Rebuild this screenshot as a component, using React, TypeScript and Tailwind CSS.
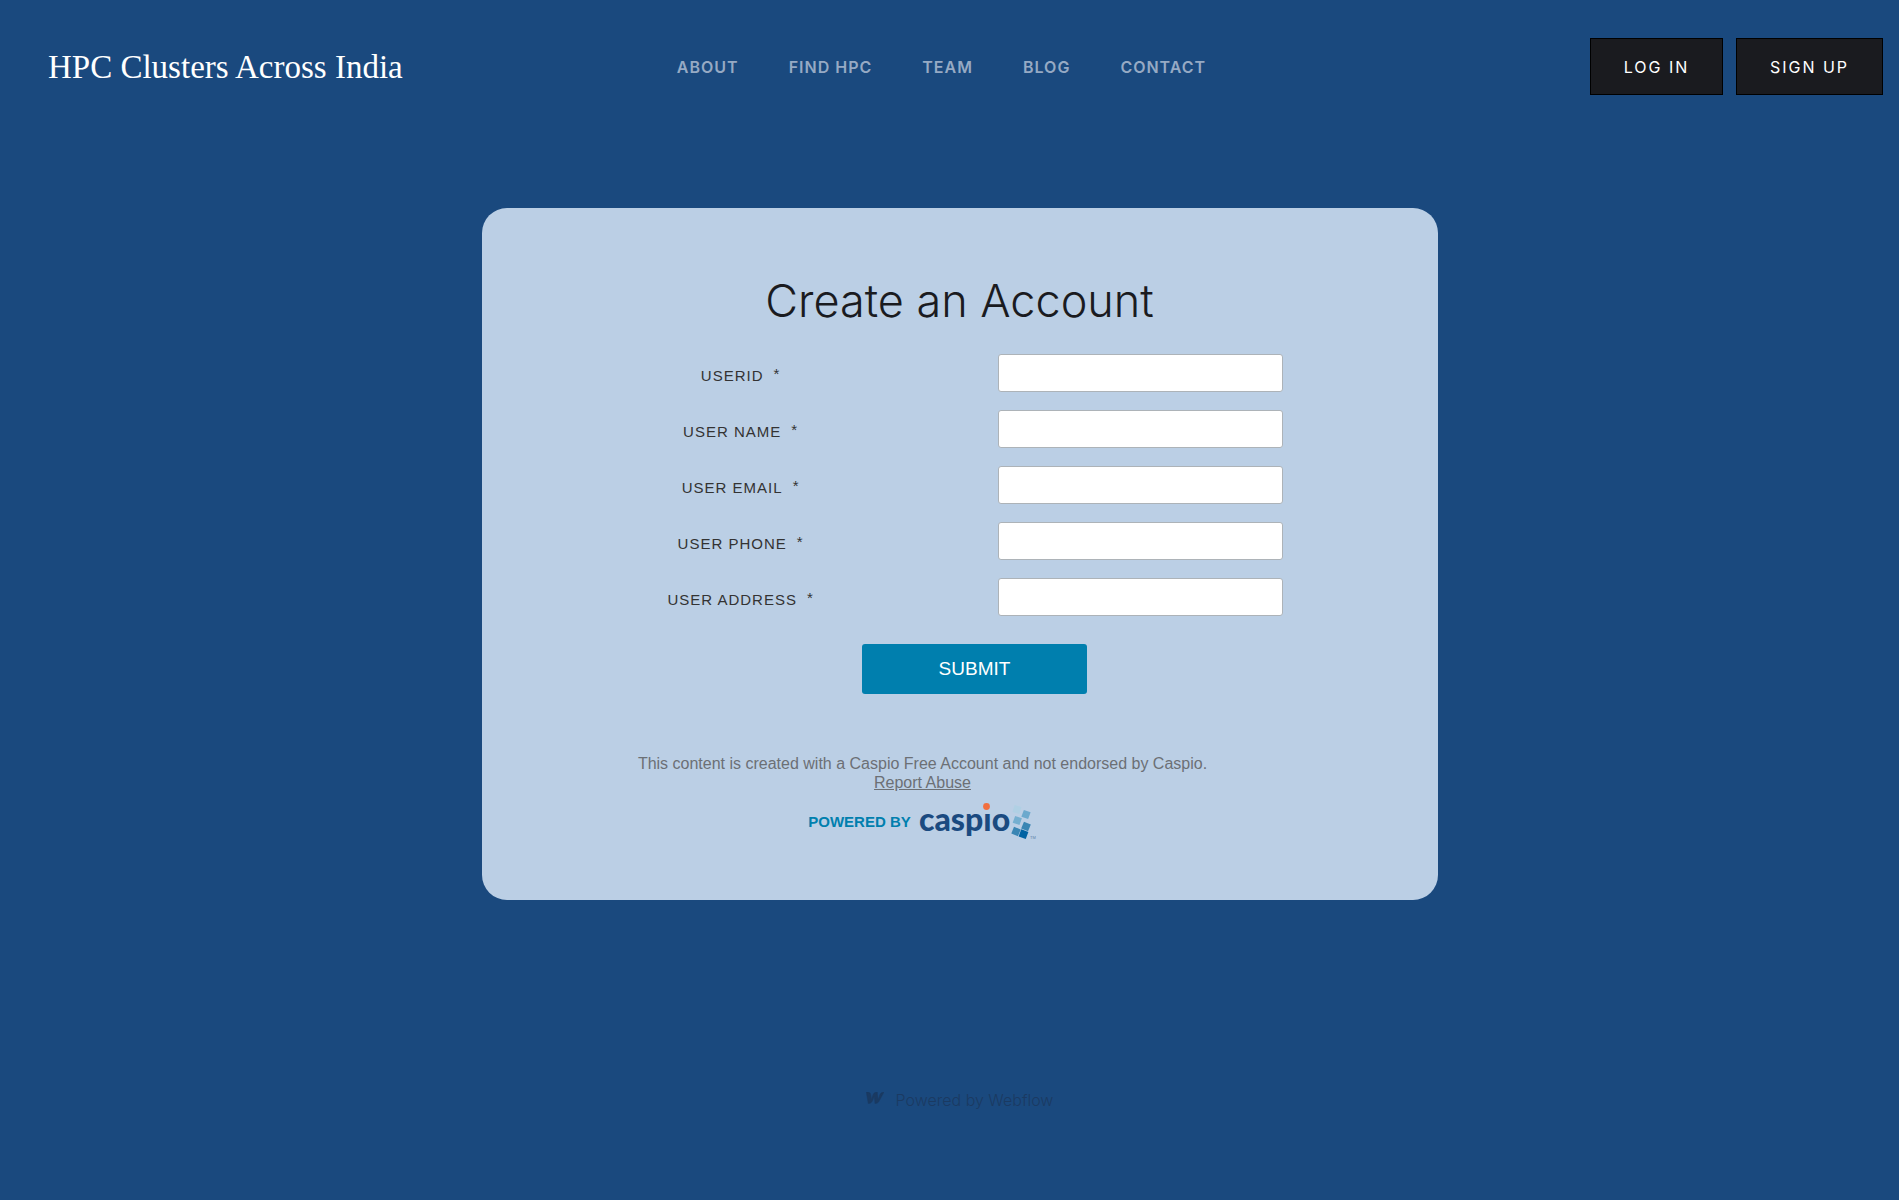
const links = ["About", "Find HPC", "Team", "Blog", "Contact"];

const fields = [
  { id: "userid", label: "USERID" },
  { id: "user-name", label: "USER NAME" },
  { id: "user-email", label: "USER EMAIL" },
  { id: "user-phone", label: "USER PHONE" },
  { id: "user-address", label: "USER ADDRESS" },
];

function CaspioLogo() {
  return (
    <svg width="118" height="40" viewBox="0 0 118 40" role="img" aria-label="Caspio" className="overflow-visible">
      <text x="0" y="30" fill="#1a4a80" className="font-['Lato',sans-serif] text-[32px] leading-8 font-black">
        caspıo
      </text>
      <circle cx="67.500" cy="5.500" r="3.4" fill="#f26f3f" />
      <g>
        <rect x="-3.6" y="-3.6" width="7.2" height="7.2" fill="#b0d0e4" transform="translate(98 8.500) rotate(17)" />
        <rect x="-3.6" y="-3.6" width="7.2" height="7.2" fill="#6ca9cd" transform="translate(107 13.500) rotate(20)" />
        <rect x="-3.6" y="-3.6" width="7.2" height="7.2" fill="#75afd0" transform="translate(98.300 19.500) rotate(20)" />
        <rect x="-3.7" y="-3.7" width="7.4" height="7.4" fill="#3a86b4" transform="translate(107 25.500) rotate(22)" />
        <rect x="-3.6" y="-3.6" width="7.2" height="7.2" fill="#3a86b4" transform="translate(97 30.500) rotate(22)" />
        <rect x="-3.8" y="-3.8" width="7.6" height="7.6" fill="#0063a3" transform="translate(104.500 33.200) rotate(20)" />
      </g>
      <text x="111" y="38" fill="#5c7fa6" className="font-['Liberation_Sans',sans-serif] text-[4px] leading-none">
        TM
      </text>
    </svg>
  );
}

function WebflowMark() {
  return (
    <svg
      width="18"
      height="12"
      viewBox="0 0 18 12"
      fill="currentColor"
      stroke="currentColor"
      strokeWidth="0.5"
      aria-hidden="true"
      className="mb-1"
    >
      <path d="M18 0C16 0 14.600.9 13.900 2.800L12 8 11.200 0C9.200 0 7.800 1 7.100 2.800L5.200 7.800C5.200 5 5 2.500 4.200 1.200 3.500.3 2 0 .3 0L2.300 11.600C4.400 11.600 5.800 10.400 6.500 8.800L8.300 4.300 9 11.600C11.200 11.600 12.600 10.600 13.400 8.600Z" />
    </svg>
  );
}

export default function App() {
  return (
    <div className="flex min-h-screen flex-col bg-[#1a497e] font-['Liberation_Sans',Arial,sans-serif]">
      <header className="grid grid-cols-[1fr_auto_1fr] items-center px-4 pt-[38px]">
        <a href="#home" className="pl-8 font-['Liberation_Serif',serif] text-[33px] leading-10 text-white">
          HPC Clusters Across India
        </a>
        <nav className="flex gap-[50px] pr-4">
          {links.map((link) => (
            <a
              key={link}
              href={"#" + link.toLowerCase().replace(" ", "-")}
              className="font-['Inter',sans-serif] text-base leading-6 font-semibold tracking-[1px] text-[#96aac4] uppercase"
            >
              {link}
            </a>
          ))}
        </nav>
        <div className="flex justify-end gap-[13px] font-['Inter',sans-serif] text-base tracking-[2px] text-white">
          <button type="button" className="h-[57px] w-[133px] border border-black bg-[#1a1b1f]">
            LOG IN
          </button>
          <button type="button" className="h-[57px] w-[147px] border border-black bg-[#1a1b1f]">
            SIGN UP
          </button>
        </div>
      </header>

      <main className="mt-[113px] flex justify-center pl-5">
        <section className="w-full max-w-[956px] rounded-[25px] bg-[#bbcfe5] pt-[66px] pb-[59px]">
          <h1 className="text-center font-['Inter',sans-serif] text-[45px] leading-[54px] font-light text-[#1a1b1f]">
            Create an Account
          </h1>
          <form className="mt-[26px]">
            <div className="flex flex-col gap-[18px]">
              {fields.map((field) => (
                <div key={field.id} className="flex items-center">
                  <label
                    htmlFor={field.id}
                    className="flex w-[54%] items-start justify-center gap-2.5 pt-1.5 pl-0.5 text-[15px] leading-5 tracking-[1px] text-[#333333]"
                  >
                    {field.label}
                    <span className="-mt-0.5">*</span>
                  </label>
                  <input
                    id={field.id}
                    type="text"
                    required
                    className="h-[38px] w-[285px] rounded-[3px] border border-[#adb3b8] bg-white px-2 text-[15px] outline-none"
                  />
                </div>
              ))}
            </div>
            <div className="mt-7 flex justify-center pl-[30px]">
              <button type="submit" className="h-[50px] w-[225px] rounded-[3px] bg-[#007fae] text-[19px] text-white">
                SUBMIT
              </button>
            </div>
          </form>
          <div className="mt-[60px] pr-[74px] text-center text-base leading-[19px] text-[#6c7075]">
            <p>This content is created with a Caspio Free Account and not endorsed by Caspio.</p>
            <a href="#report-abuse" className="underline">
              Report Abuse
            </a>
            <div className="mt-[9px] flex items-center justify-center gap-2">
              <a href="#caspio" className="text-[15px] font-bold text-[#007fae]">
                POWERED BY
              </a>
              <CaspioLogo />
            </div>
          </div>
        </section>
      </main>

      <footer className="mt-[188px] flex justify-center pl-5 pb-20">
        <a
          href="#webflow"
          className="flex items-center gap-3 font-['Inter',sans-serif] text-base leading-6 font-light text-[#1a3a62]"
        >
          <WebflowMark />
          Powered by Webflow
        </a>
      </footer>
    </div>
  );
}
